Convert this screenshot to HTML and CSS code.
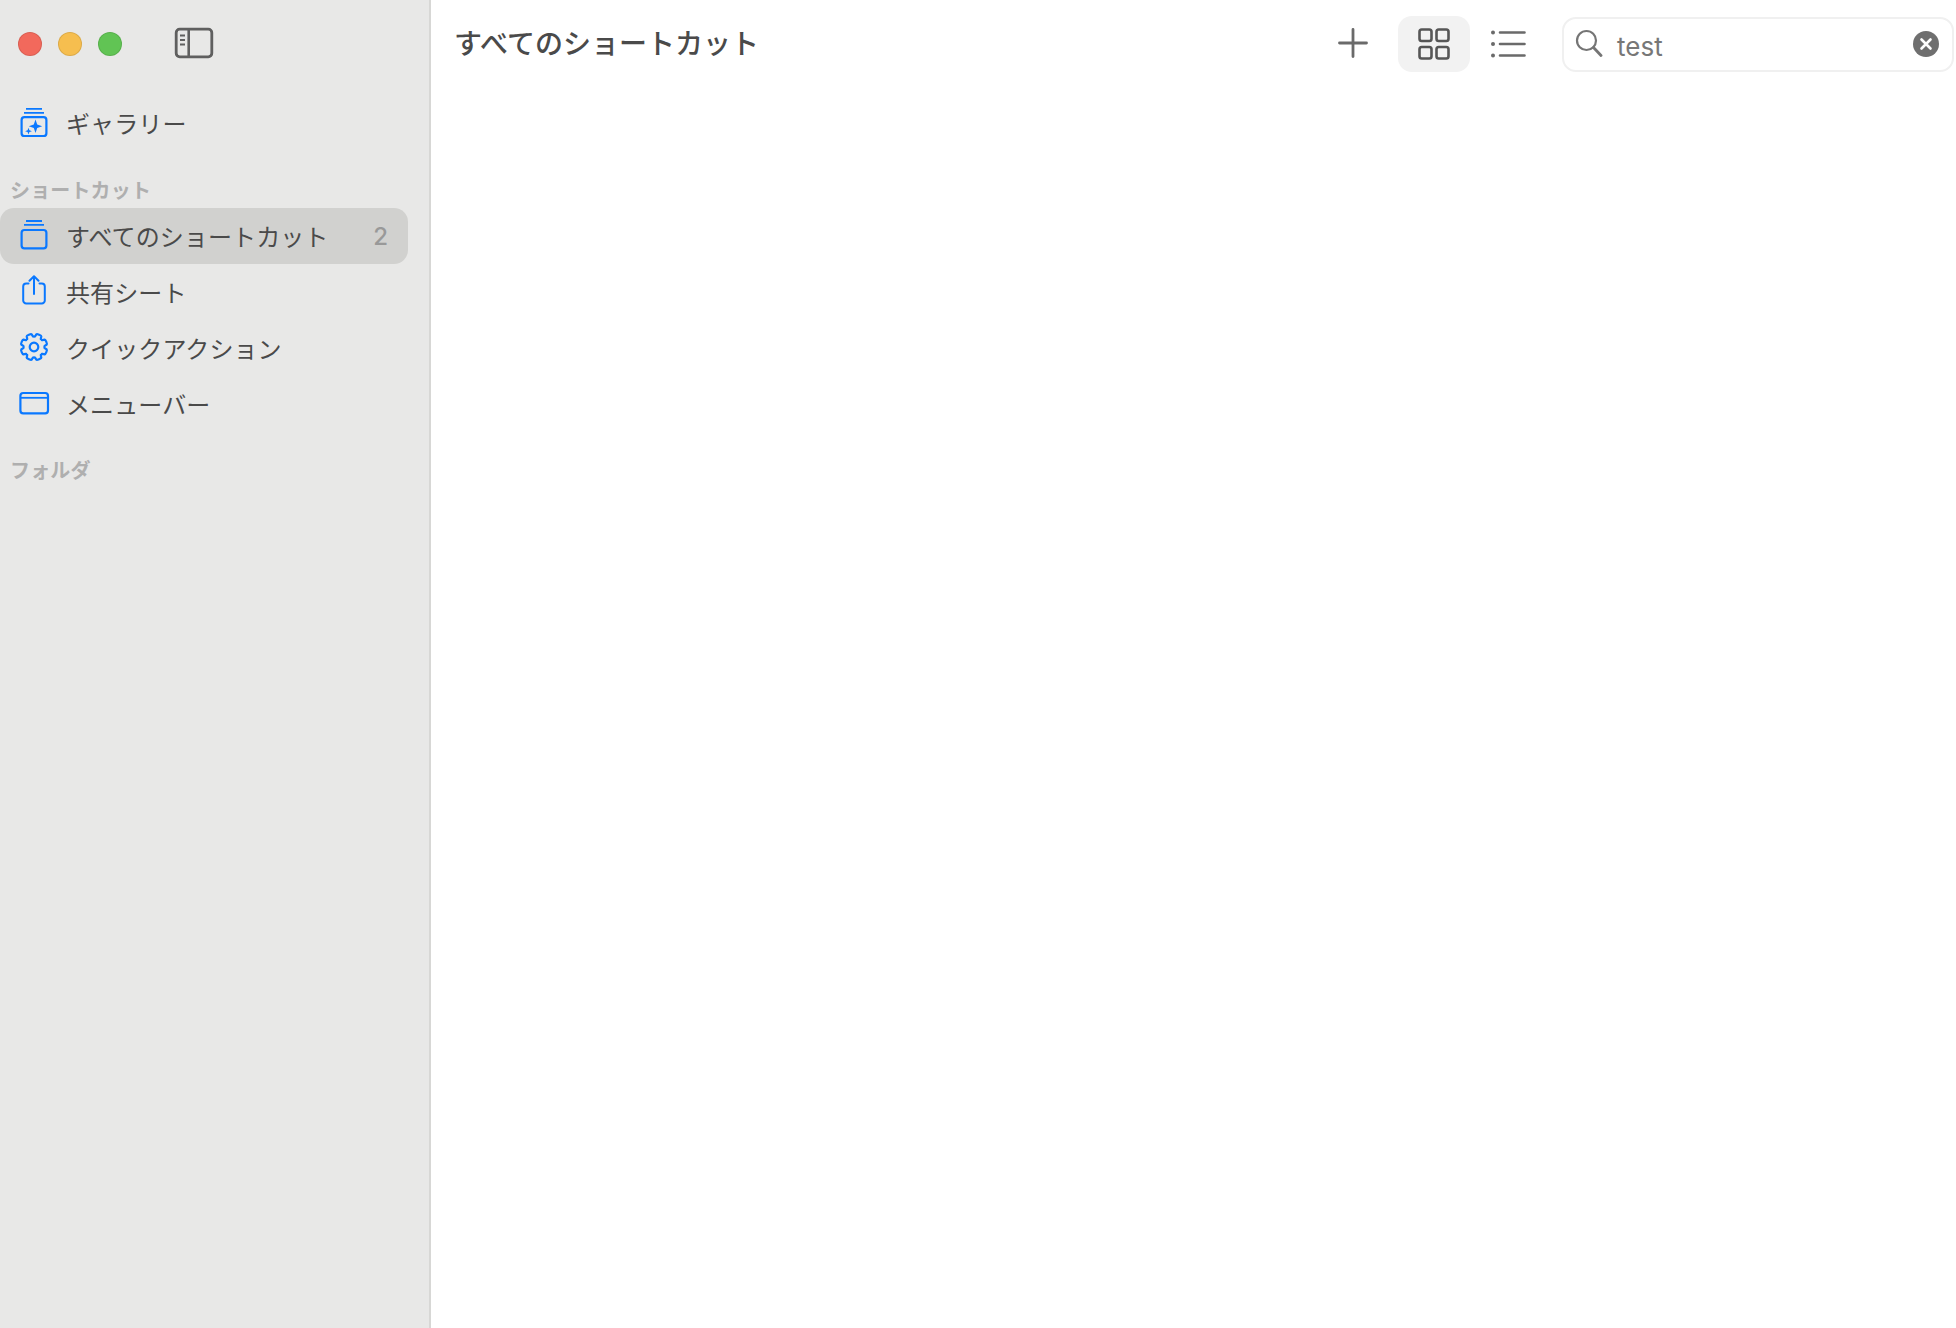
FILE: index.html
```html
<!DOCTYPE html>
<html lang="ja">
<head>
<meta charset="utf-8">
<title>ショートカット</title>
<link rel="stylesheet" href="styles.css">
</head>
<body>
<div class="window">
  <aside class="sidebar">
    <div class="titlebar">
      <span class="light light-red"></span>
      <span class="light light-yellow"></span>
      <span class="light light-green"></span>
      <svg class="toggle" width="40" height="32" viewBox="0 0 40 32" fill="none" stroke="#5f5f5f">
        <rect x="2.2" y="2.2" width="35.6" height="27.6" rx="3.5" stroke-width="2.8"/>
        <path d="M14.7 2v28" stroke-width="2.6"/>
        <path d="M6 8.5h5M6 13h5M6 17.5h5" stroke-width="1.8"/>
      </svg>
    </div>
    <nav class="nav">
      <div class="row row-first">
        <svg class="icon" width="34" height="34" viewBox="0 0 34 34" fill="none" stroke="#0a78ff" stroke-width="2.2">
          <path d="M9 2.8h16M7 6.8h20" stroke-width="1.8"/>
          <rect x="4.6" y="11.2" width="24.8" height="18.8" rx="2.8"/>
          <path d="M18.500 13.500l1.700 5 5 1.700-5 1.700-1.700 5-1.700-5-5-1.700 5-1.700z" fill="#0a78ff" stroke="none"/>
          <path d="M11.500 21.800l.9 2.500 2.500.9-2.500.9-.9 2.500-.9-2.500-2.500-.9 2.500-.9z" fill="#0a78ff" stroke="none"/>
        </svg>
        <span class="label">ギャラリー</span>
      </div>
      <h2 class="section">ショートカット</h2>
      <div class="row row-selected">
        <svg class="icon" width="34" height="34" viewBox="0 0 34 34" fill="none" stroke="#0a78ff" stroke-width="2.2">
          <path d="M9 2h16M7 5.8h20" stroke-width="1.8"/>
          <rect x="4.6" y="11" width="24.8" height="18.4" rx="2.8"/>
        </svg>
        <span class="label">すべてのショートカット</span>
        <span class="count">2</span>
      </div>
      <div class="row">
        <svg class="icon" width="34" height="34" viewBox="0 0 34 34" fill="none" stroke="#0a78ff" stroke-width="2" stroke-linecap="round" stroke-linejoin="round">
          <path d="M17 1.600V19M12.500 5.700L17 1.200l4.500 4.500"/>
          <path d="M11.500 8.400H9.200a3 3 0 0 0-3 3V25.400a3 3 0 0 0 3 3H24.800a3 3 0 0 0 3-3V11.400a3 3 0 0 0-3-3H22.500"/>
        </svg>
        <span class="label">共有シート</span>
      </div>
      <div class="row">
        <svg class="icon icon-gear" width="34" height="34" viewBox="-17 -17 34 34" fill="none" stroke="#0a78ff" stroke-width="2.2" stroke-linejoin="round">
          <defs>
            <path id="tooth" d="M-3.830-9.240L-3.100-10.300-2.600-12.800C-2.400-13.500 2.400-13.500 2.600-12.800L3.100-10.300 3.830-9.240"/>
          </defs>
          <use href="#tooth" transform="rotate(22.500)"/>
          <use href="#tooth" transform="rotate(67.500)"/>
          <use href="#tooth" transform="rotate(112.500)"/>
          <use href="#tooth" transform="rotate(157.500)"/>
          <use href="#tooth" transform="rotate(202.500)"/>
          <use href="#tooth" transform="rotate(247.500)"/>
          <use href="#tooth" transform="rotate(292.500)"/>
          <use href="#tooth" transform="rotate(337.500)"/>
          <circle r="4.300"/>
        </svg>
        <span class="label">クイックアクション</span>
      </div>
      <div class="row">
        <svg class="icon" width="34" height="34" viewBox="0 0 34 34" fill="none" stroke="#0a78ff" stroke-width="2.2">
          <rect x="3.400" y="6" width="27.600" height="20.400" rx="2.800"/>
          <path d="M3.400 10.800H31" stroke-width="1.800"/>
        </svg>
        <span class="label">メニューバー</span>
      </div>
      <h2 class="section section-folder">フォルダ</h2>
    </nav>
  </aside>
  <main class="main">
    <header class="toolbar">
      <h1 class="title">すべてのショートカット</h1>
      <svg class="tool-plus" width="32" height="32" viewBox="0 0 32 32" fill="none" stroke="#6a6a6a" stroke-width="2.800" stroke-linecap="round">
        <path d="M16 2.500v27M2.500 16h27"/>
      </svg>
      <div class="tool-grid">
        <svg width="32" height="32" viewBox="0 0 32 32" fill="none" stroke="#565656" stroke-width="2.600">
          <rect x="1.500" y="1.500" width="12" height="11.500" rx="2.200"/>
          <rect x="18.500" y="1.500" width="12" height="11.500" rx="2.200"/>
          <rect x="1.500" y="19" width="12" height="11.500" rx="2.200"/>
          <rect x="18.500" y="19" width="12" height="11.500" rx="2.200"/>
        </svg>
      </div>
      <svg class="tool-list" width="35" height="28" viewBox="0 0 35 28" fill="none" stroke="#6a6a6a" stroke-width="2.600" stroke-linecap="round">
        <path d="M9 2.500h24.500M9 14h24.500M9 25.500h24.500"/>
        <circle cx="2" cy="2.500" r="2" fill="#6a6a6a" stroke="none"/>
        <circle cx="2" cy="14" r="2" fill="#6a6a6a" stroke="none"/>
        <circle cx="2" cy="25.500" r="2" fill="#6a6a6a" stroke="none"/>
      </svg>
      <div class="search">
        <svg class="search-icon" width="28" height="28" viewBox="0 0 28 28" fill="none" stroke="#757575" stroke-width="2.200" stroke-linecap="round">
          <circle cx="11.500" cy="11.500" r="9.500"/>
          <path d="M18.500 18.500l7.500 8" stroke-width="2.800"/>
        </svg>
        <span class="search-text">test</span>
        <span class="search-clear">
          <svg width="14" height="14" viewBox="0 0 14 14" fill="none" stroke="#fff" stroke-width="2.600" stroke-linecap="round">
            <path d="M2.500 2.500l9 9M11.500 2.500l-9 9"/>
          </svg>
        </span>
      </div>
    </header>
  </main>
</div>
</body>
</html>
```
FILE: styles.css
```css
* { box-sizing: border-box; }
html, body { margin: 0; height: 100%; }
body {
  background: #fff;
  font-family: "Noto Sans CJK JP", "Noto Sans", sans-serif;
  color: #4a4a4a;
  overflow: hidden;
}
.window { display: flex; height: 100vh; }

.sidebar {
  flex: 0 0 431px;
  background: #e8e8e7;
  border-right: 2px solid #d7d7d5;
}
.titlebar {
  display: flex;
  align-items: center;
  height: 87px;
  padding-left: 18px;
  gap: 16px;
}
.light {
  width: 24px;
  height: 24px;
  border-radius: 50%;
  border: 1px solid rgba(0, 0, 0, 0.1);
  margin-top: 1px;
}
.light-red { background: #f2695c; }
.light-yellow { background: #f6be4f; }
.light-green { background: #61c454; }
.toggle { margin-left: 36px; margin-top: -1px; }

.nav { margin-right: 21px; padding-top: 8px; }
.row {
  display: flex;
  align-items: center;
  height: 56px;
  padding-left: 17px;
  padding-right: 20px;
  border-radius: 14px;
}
.row-selected { background: #d1d1cf; }
.icon { flex: none; }
.icon-gear { margin-top: -3px; }
.label {
  margin-left: 15px;
  font-size: 24px;
  line-height: 32px;
  color: #4a4a4a;
  letter-spacing: 0.1px;
}
.count {
  margin-left: auto;
  font-family: "Inter", sans-serif;
  font-size: 24px;
  font-weight: 500;
  color: #999;
}
.section {
  margin: 25px 0 4px;
  padding-left: 10px;
  font-size: 20px;
  line-height: 28px;
  font-weight: 700;
  color: #afafaf;
  letter-spacing: 0.15px;
}
.section-folder { margin-top: 24px; }

.main { flex: 1; min-width: 0; background: #fff; }
.toolbar {
  display: flex;
  align-items: center;
  padding: 16px 2px 0 23px;
}
.title {
  flex: 1;
  margin: -5px 0 0;
  font-size: 28px;
  line-height: 56px;
  font-weight: 500;
  color: #4a4a4a;
}
.tool-plus { margin-right: 29px; margin-top: -3px; }
.tool-grid {
  display: flex;
  align-items: center;
  justify-content: center;
  width: 72px;
  height: 56px;
  border-radius: 14px;
  background: #f2f2f2;
}
.tool-list { margin-left: 21px; margin-right: 36px; }
.search {
  display: flex;
  align-items: center;
  width: 392px;
  height: 55px;
  padding: 0 13px 0 11px;
  border: 2px solid #f0f0f0;
  border-radius: 14px;
  background: #fff;
}
.search-icon { margin-top: -3px; }
.search-text {
  margin-left: 14px;
  font-family: "Inter", sans-serif;
  font-size: 26px;
  color: #777;
  margin-top: 5px;
}
.search-clear {
  display: flex;
  align-items: center;
  justify-content: center;
  width: 26px;
  height: 26px;
  margin-left: auto;
  border-radius: 50%;
  background: #6f6f6f;
}
```
